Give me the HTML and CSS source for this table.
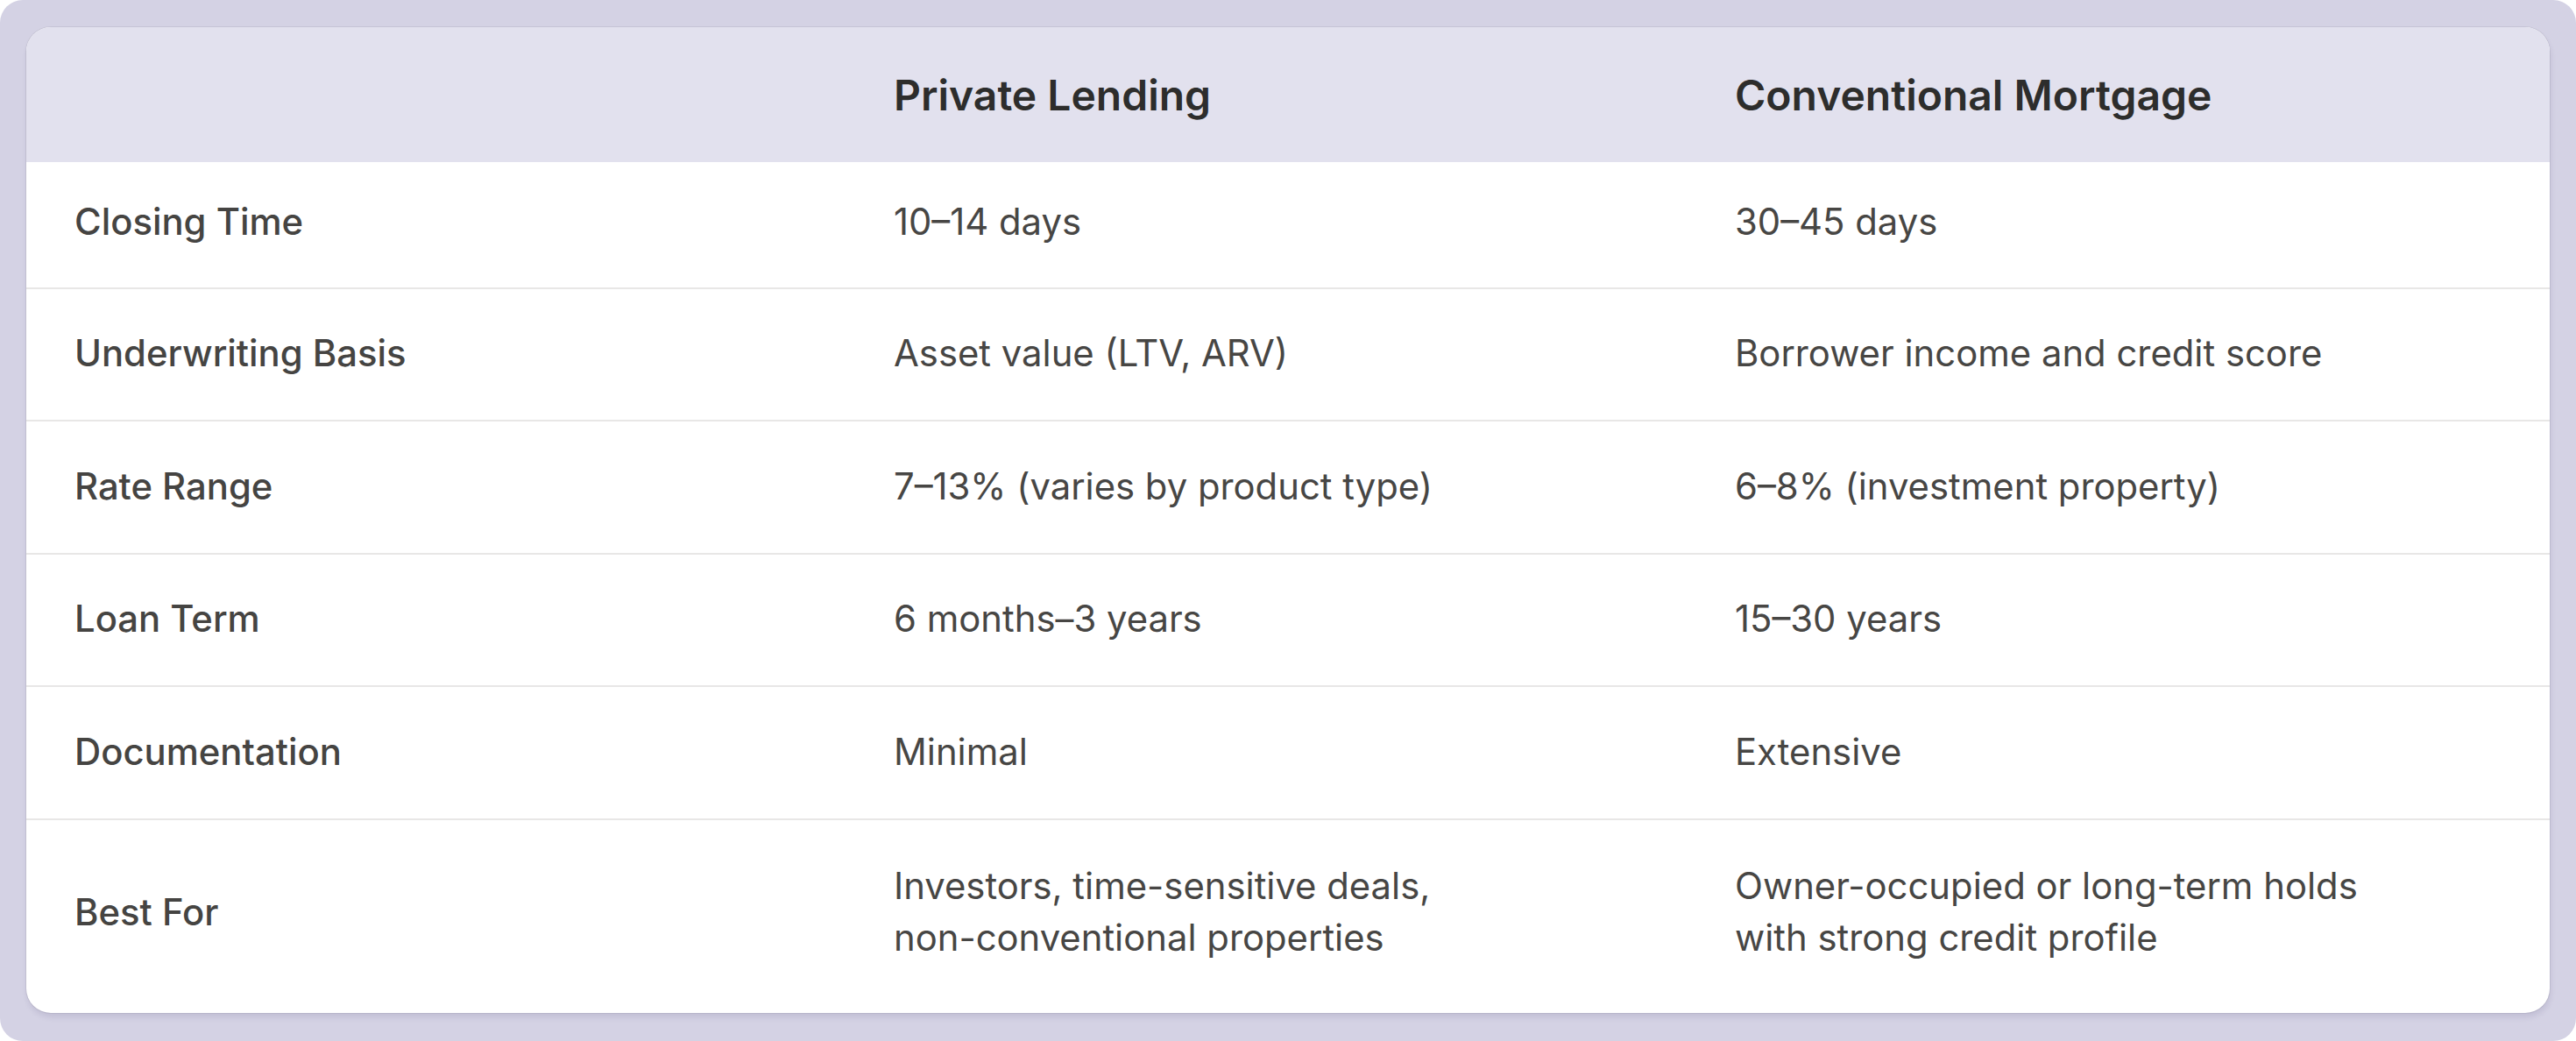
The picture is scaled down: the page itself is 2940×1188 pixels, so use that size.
FILE: index.html
```html
<!DOCTYPE html>
<html lang="en">
<head>
<meta charset="utf-8">
<title>Private Lending vs Conventional Mortgage</title>
<link rel="stylesheet" href="styles.css">
</head>
<body>
<div class="frame">
  <div class="card">
    <div class="row head">
      <div class="cell"></div>
      <div class="cell">Private Lending</div>
      <div class="cell">Conventional Mortgage</div>
    </div>
    <div class="row first">
      <div class="cell label">Closing Time</div>
      <div class="cell">10–14 days</div>
      <div class="cell">30–45 days</div>
    </div>
    <div class="row">
      <div class="cell label">Underwriting Basis</div>
      <div class="cell">Asset value (LTV, ARV)</div>
      <div class="cell">Borrower income and credit score</div>
    </div>
    <div class="row">
      <div class="cell label">Rate Range</div>
      <div class="cell">7–13% (varies by product type)</div>
      <div class="cell">6–8% (investment property)</div>
    </div>
    <div class="row">
      <div class="cell label">Loan Term</div>
      <div class="cell">6 months–3 years</div>
      <div class="cell">15–30 years</div>
    </div>
    <div class="row">
      <div class="cell label">Documentation</div>
      <div class="cell">Minimal</div>
      <div class="cell">Extensive</div>
    </div>
    <div class="row last">
      <div class="cell label">Best For</div>
      <div class="cell">Investors, time-sensitive deals,<br>non-conventional properties</div>
      <div class="cell">Owner-occupied or long-term holds<br>with strong credit profile</div>
    </div>
  </div>
</div>
</body>
</html>
```
FILE: styles.css
```css
html, body {
  margin: 0;
  padding: 0;
  background: #ffffff;
}

body {
  font-family: Inter, "Noto Sans", "Liberation Sans", sans-serif;
}

.frame {
  box-sizing: border-box;
  width: 2940px;
  height: 1188px;
  background: #d4d2e4;
  border-radius: 26px;
  padding: 31px 30px 0 30px;
}

.card {
  background: #ffffff;
  border-radius: 28px;
  overflow: hidden;
  box-shadow: 0 0 0 1px rgba(0, 0, 0, 0.06), 1px 5px 6px rgba(40, 30, 90, 0.10);
}

.row {
  display: grid;
  grid-template-columns: 935px 960px 1fr;
  align-items: center;
  padding: 44.5px 0 46px 0;
  border-bottom: 2px solid #e8e7e6;
  font-size: 41.8px;
  line-height: 59px;
  color: #474644;
}

.cell {
  padding-left: 55px;
}

.head {
  background: #e2e1ee;
  height: 154px;
  box-sizing: border-box;
  padding: 0;
  border-bottom: none;
  font-size: 48px;
  font-weight: 600;
  color: #2d2d2c;
}

.first {
  padding-top: 39px;
  padding-bottom: 44.5px;
}

.last {
  border-bottom: none;
  padding-top: 46.5px;
  padding-bottom: 56px;
}

.label {
  font-weight: 500;
  color: #454442;
}
```
